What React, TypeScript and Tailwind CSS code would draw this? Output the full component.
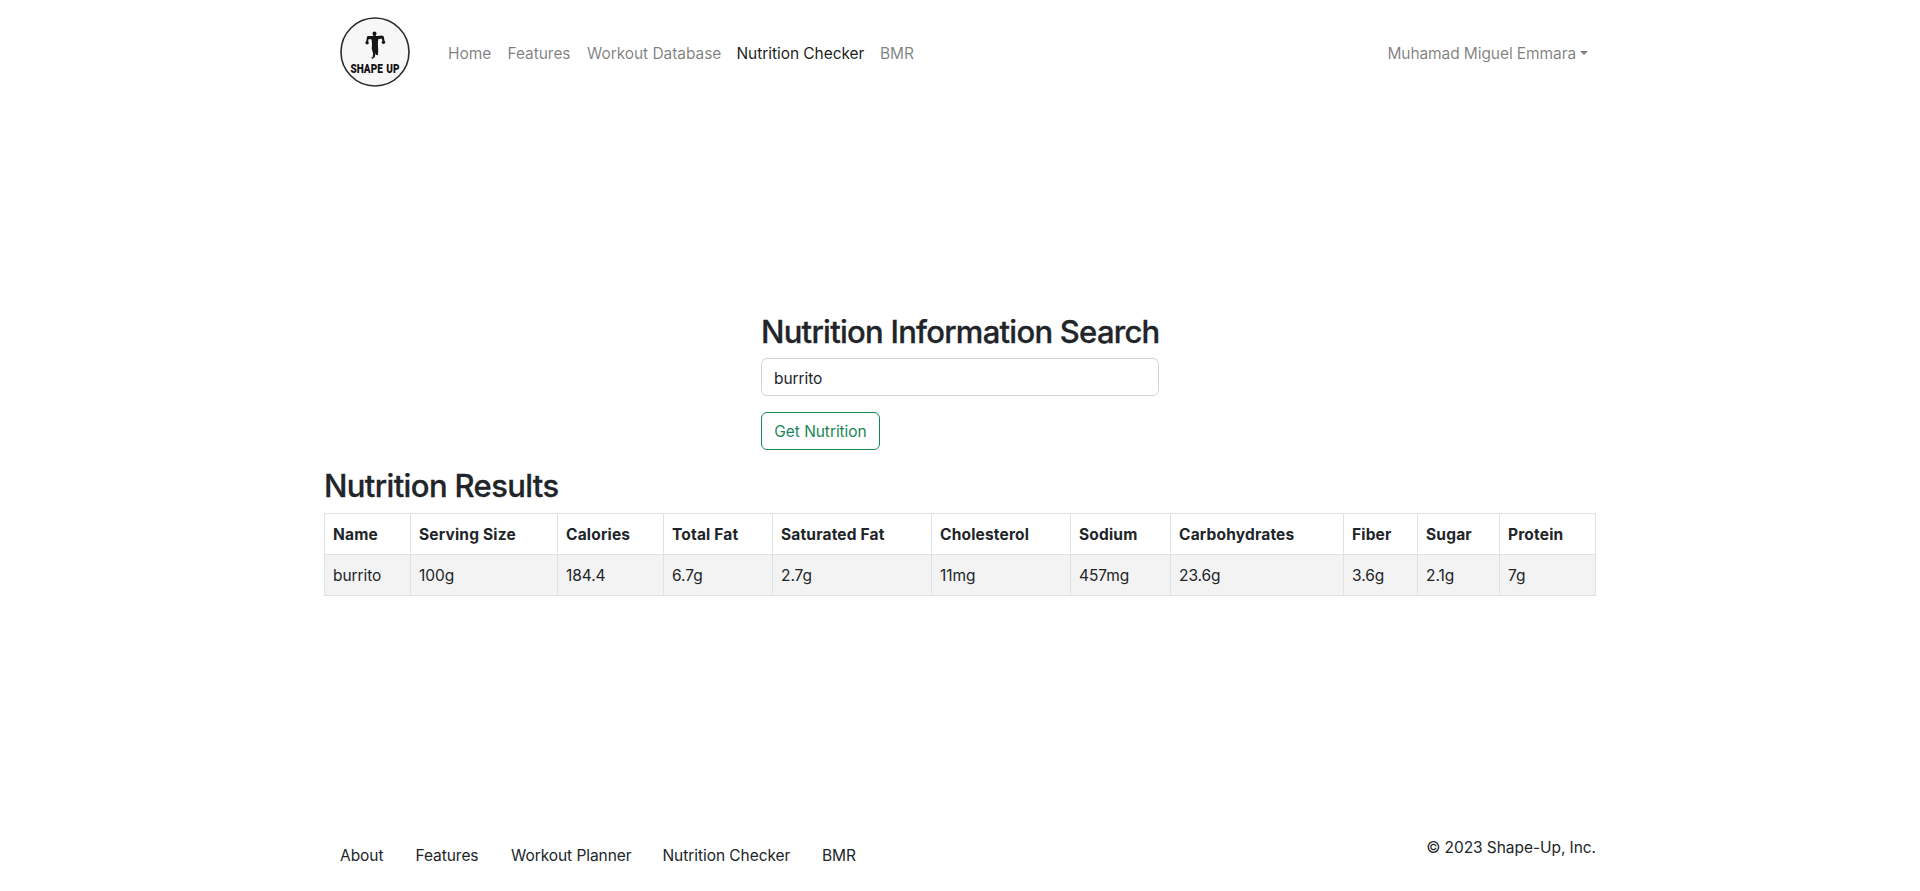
import React from "react";

const navLinks = [
  { label: "Home", box: "w-[59.5px]", active: false },
  { label: "Features", box: "w-[79.5px]", active: false },
  { label: "Workout Database", box: "w-[149.5px]", active: false },
  { label: "Nutrition Checker", box: "w-[143.5px]", active: true },
  { label: "BMR", box: "w-[50px]", active: false },
];

const footerLinks = [
  { label: "About", box: "w-[75.5px]" },
  { label: "Features", box: "w-[95.5px]" },
  { label: "Workout Planner", box: "w-[151.5px]" },
  { label: "Nutrition Checker", box: "w-[159.5px]" },
  { label: "BMR", box: "w-[66px]" },
];

const columns = [
  { head: "Name", value: "burrito", width: "w-[86px]" },
  { head: "Serving Size", value: "100g", width: "w-[147px]" },
  { head: "Calories", value: "184.4", width: "w-[106px]" },
  { head: "Total Fat", value: "6.7g", width: "w-[109px]" },
  { head: "Saturated Fat", value: "2.7g", width: "w-[159px]" },
  { head: "Cholesterol", value: "11mg", width: "w-[139px]" },
  { head: "Sodium", value: "457mg", width: "w-[100px]" },
  { head: "Carbohydrates", value: "23.6g", width: "w-[173px]" },
  { head: "Fiber", value: "3.6g", width: "w-[74px]" },
  { head: "Sugar", value: "2.1g", width: "w-[82px]" },
  { head: "Protein", value: "7g", width: "w-[96px]" },
];

function Logo() {
  return (
    <svg width="72" height="72" viewBox="0 0 72 72" className="overflow-visible" aria-label="Shape Up">
      <circle cx="36" cy="36" r="34" fill="#f7f7f7" stroke="#2b2b2b" strokeWidth="1.6" />
      <g fill="#151515">
        <ellipse cx="35.5" cy="17.8" rx="2" ry="2.4" />
        <path d="M28.6 20 33 20.1h5l5-.5 1.8.8.8 5.2-1.6.3-1.5-3.3-3.3.6-.3 5.1.3 5.2-.2 5.4h-1.8l-.5-1.6-1.2 4.5h-1.9l.5-4.4-1.4-4.7.3-4.2-.4-5.1-2.8-.3-1.1 3.7-1.6-.2.7-5.1z" />
        <circle cx="28.1" cy="26.8" r="1.7" />
        <circle cx="44.5" cy="26.2" r="1.7" />
        <circle cx="33.4" cy="41.8" r="0.9" />
      </g>
      <text x="11.5" y="57.2" textLength="49" lengthAdjust="spacingAndGlyphs" fontSize="13.2" fontWeight="900" fill="#111" fontFamily="Roboto, sans-serif" letterSpacing="0" wordSpacing="1.5">
        SHAPE UP
      </text>
    </svg>
  );
}

export default function App() {
  return (
    <div className="flex h-[891px] flex-col overflow-hidden bg-white font-['Inter',sans-serif] text-[15.5px] leading-6 tracking-[-0.06px] text-[#212529]">
      <div className="mx-auto flex h-full w-[1272px] flex-col">
        <nav className="flex h-[104px] items-center pl-[15px]">
          <Logo />
          <div className="ml-[26px] flex">
            {navLinks.map((l) => (
              <a key={l.label} className={`${l.box} whitespace-nowrap pb-2 pt-3 ${l.active ? "text-black/90" : "text-black/50"} flex`}>
                <span className="pl-[11px]">{l.label}</span>
              </a>
            ))}
          </div>
          <button className="ml-auto flex items-center whitespace-nowrap pr-2 pt-1 tracking-[-0.09px] text-black/50">
            Muhamad Miguel Emmara
            <span className="mb-0.5 ml-1 border-x-[4.8px] border-t-[4.8px] border-x-transparent border-t-current" />
          </button>
        </nav>

        <main>
          <form className="mx-auto mt-[209px] w-[398px]">
            <h2 className="mb-[7px] whitespace-nowrap text-[31px] font-medium leading-[38px] tracking-[-0.74px] [-webkit-text-stroke:0.3px_#212529]">Nutrition Information Search</h2>
            <input
              defaultValue="burrito"
              className="block h-[38px] w-full rounded-md border border-[#ced4da] px-3 pt-0.5 tracking-[-0.06px] outline-none"
            />
            <button type="button" className="mt-4 block h-[38px] w-[119px] whitespace-nowrap rounded-md border border-[#198754] pt-0.5 text-[#198754]">
              Get Nutrition
            </button>
          </form>

          <h2 className="mb-2 mt-[17px] text-[31px] font-medium leading-[38px] tracking-[-0.63px] [-webkit-text-stroke:0.3px_#212529]">Nutrition Results</h2>
          <table className="w-[1272px] table-fixed border-collapse whitespace-nowrap text-left">
            <thead>
              <tr>
                {columns.map((c) => (
                  <th key={c.head} className={`${c.width} h-[41px] border border-[#dee2e6] px-2 pt-0.5 font-bold tracking-[0.18px]`}>
                    {c.head}
                  </th>
                ))}
              </tr>
            </thead>
            <tbody>
              <tr className="bg-[#f3f3f3]">
                {columns.map((c) => (
                  <td key={c.head} className="h-[41px] border border-[#dee2e6] px-2 pt-0.5">
                    {c.value}
                  </td>
                ))}
              </tr>
            </tbody>
          </table>
        </main>

        <footer className="mt-auto flex h-[55px] items-start justify-between">
          <div className="flex pt-2">
            {footerLinks.map((l) => (
              <a key={l.label} className={`${l.box} whitespace-nowrap pl-4`}>
                {l.label}
              </a>
            ))}
          </div>
          <p>© 2023 Shape-Up, Inc.</p>
        </footer>
      </div>
    </div>
  );
}
